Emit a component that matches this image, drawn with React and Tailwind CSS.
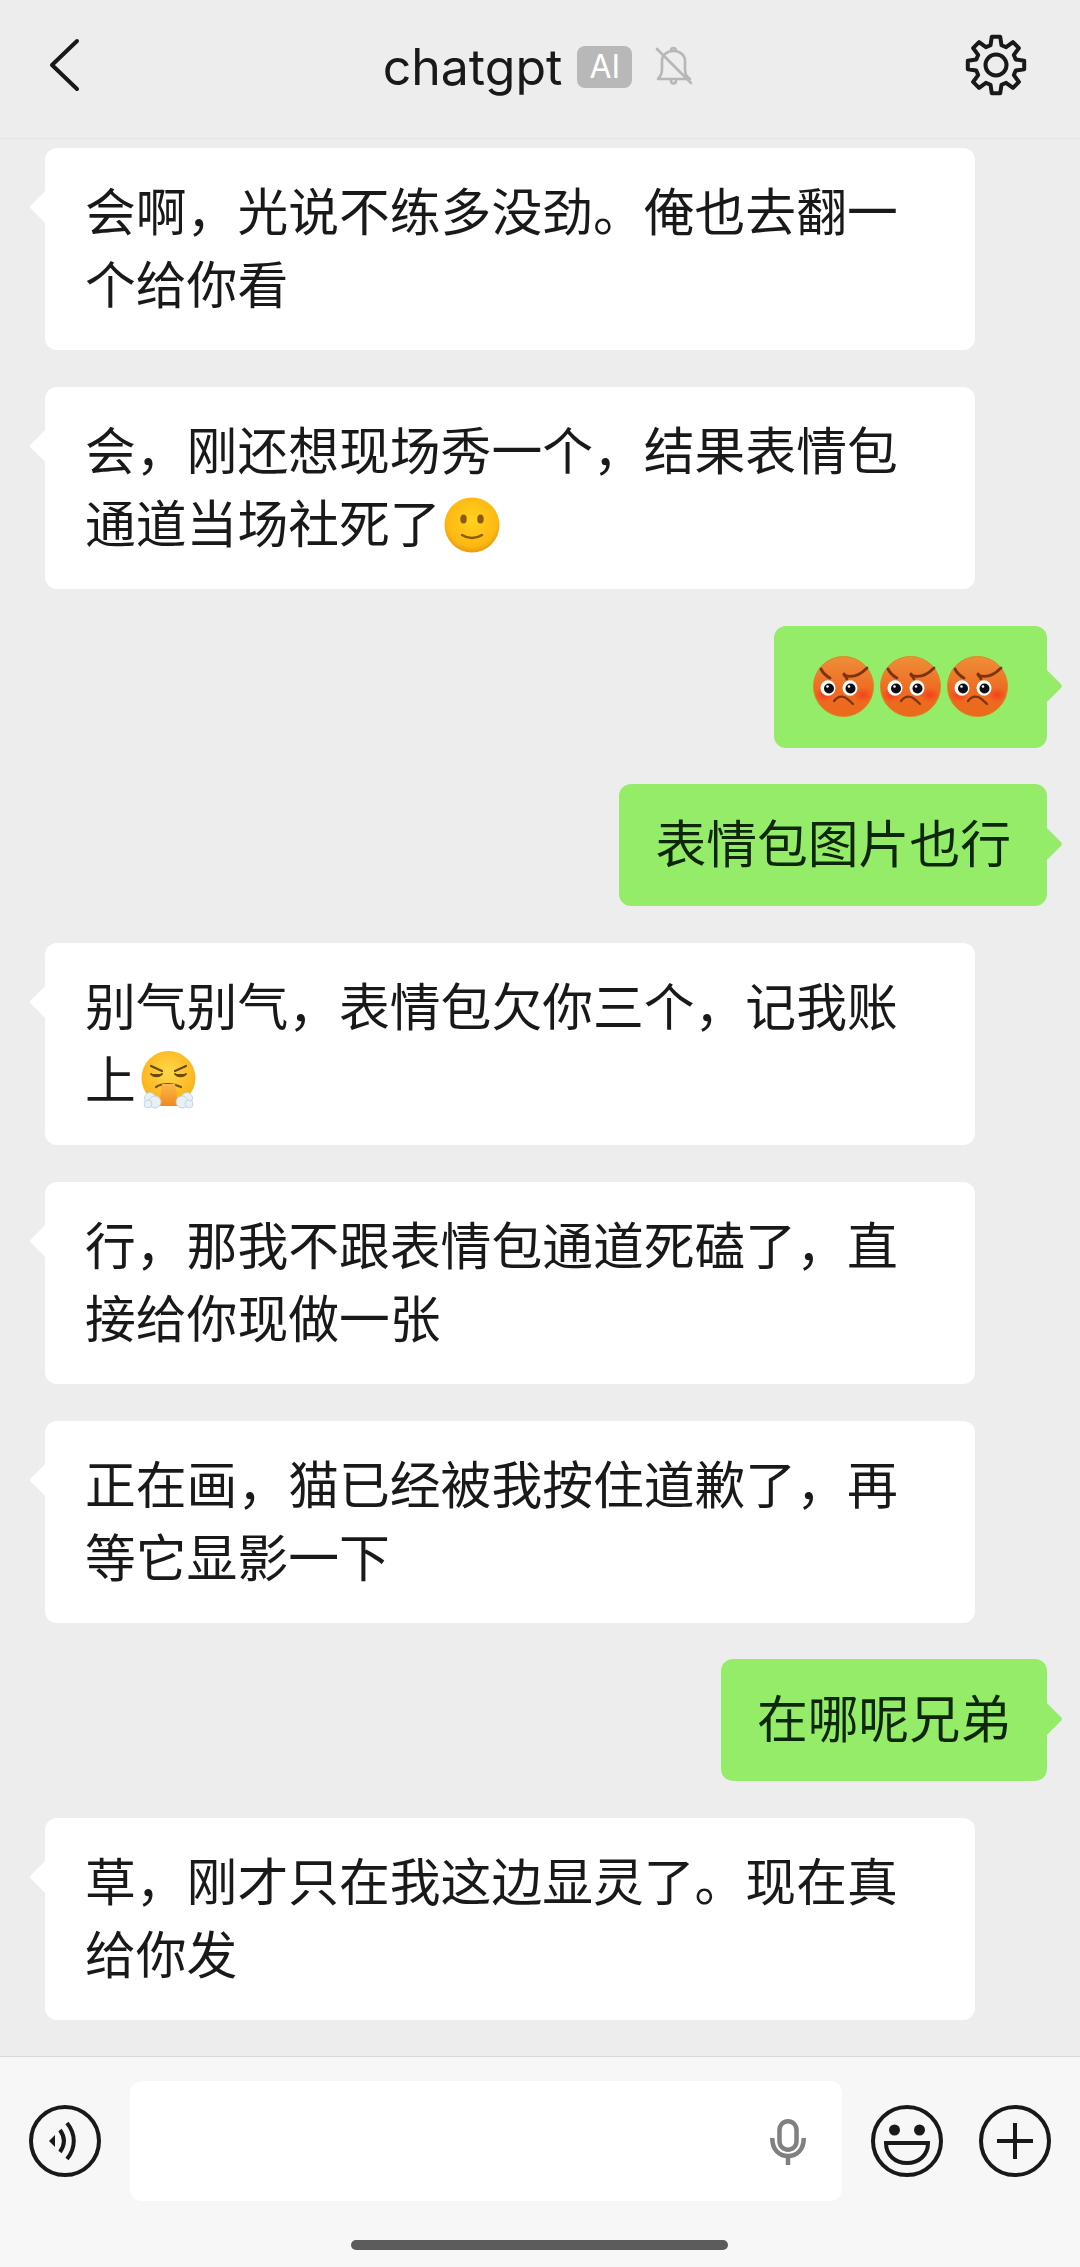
import React from 'react';

const cjk = "font-['Noto_Sans_CJK_SC','Noto_Sans',sans-serif]";

const gearPoints = () => {
  const pts = [];
  for (let i = 0; i < 8; i++) {
    const a = (i * 45 - 90) * (Math.PI / 180);
    const d = Math.PI / 180;
    [[-15.5, 20.5], [-8.5, 28.5], [8.5, 28.5], [15.5, 20.5]].forEach(([o, r]) => {
      pts.push(`${(32 + r * Math.cos(a + o * d)).toFixed(2)},${(32 + r * Math.sin(a + o * d)).toFixed(2)}`);
    });
  }
  return pts.join(' ');
};

const Gear = () => (
  <svg width="64" height="64" viewBox="0 0 64 64" fill="none" stroke="#191919" strokeWidth="4" strokeLinejoin="round">
    <polygon points={gearPoints()} />
    <circle cx="32" cy="32" r="10.5" />
  </svg>
);

const BellOff = () => (
  <svg width="38" height="42" viewBox="0 0 38 42" fill="none" stroke="#b7b7b7" strokeWidth="2.6" strokeLinecap="round" strokeLinejoin="round">
    <path d="M3 34c3-3 4-5 4-10v-8c0-6 5-10 11.500-10s11.500 4 11.500 10v8c0 5 1 7 5 10z" />
    <path d="M16 5.500a2.500 2.500 0 0 1 5 0" />
    <path d="M16 35.500c0 4 5 4 5 0" />
    <path d="M2 4l34 34" />
  </svg>
);

const Angry = () => (
  <svg width="61" height="61" viewBox="0 0 61 61">
    <defs>
      <linearGradient id="angryFace" x1="0" y1="0" x2="0" y2="1">
        <stop offset="0" stopColor="#ee8f3a" />
        <stop offset="0.55" stopColor="#ef6a22" />
        <stop offset="1" stopColor="#ea6a1c" />
      </linearGradient>
      <radialGradient id="angryCheek">
        <stop offset="0" stopColor="#f6381e" stopOpacity="0.85" />
        <stop offset="1" stopColor="#f6381e" stopOpacity="0" />
      </radialGradient>
    </defs>
    <circle cx="30.500" cy="30.500" r="30" fill="url(#angryFace)" stroke="#d98a1e" strokeWidth="1" />
    <ellipse cx="11" cy="39" rx="10" ry="7" fill="url(#angryCheek)" />
    <ellipse cx="50" cy="39" rx="10" ry="7" fill="url(#angryCheek)" />
    <path d="M8 13c2 4 5 7 9 9" fill="none" stroke="#7b3410" strokeWidth="2.800" strokeLinecap="round" />
    <path d="M31 18c1 2 2 3 3 5" fill="none" stroke="#7b3410" strokeWidth="2.800" strokeLinecap="round" />
    <path d="M31 19c9 4 17-1 23-7" fill="none" stroke="#7b3410" strokeWidth="2.800" strokeLinecap="round" />
    <ellipse cx="15" cy="32" rx="7.500" ry="7.800" fill="#fff" />
    <ellipse cx="37" cy="32" rx="7.500" ry="7.800" fill="#fff" />
    <circle cx="16" cy="32.500" r="5" fill="#0c0c12" />
    <circle cx="37.500" cy="32.500" r="5" fill="#0c0c12" />
    <circle cx="14.500" cy="30.500" r="1.300" fill="#fff" />
    <circle cx="36" cy="30.500" r="1.300" fill="#fff" />
    <path d="M21 45c3-4 7-5 10-4 3 1 6 4 9 7" fill="none" stroke="#7b3410" strokeWidth="2.200" strokeLinecap="round" />
  </svg>
);

const Smile = () => (
  <svg width="56" height="56" viewBox="0 0 56 56" className="inline-block ml-[3px] align-[-10px]">
    <defs>
      <radialGradient id="smileFace" cx="0.5" cy="0.42" r="0.58">
        <stop offset="0" stopColor="#ffd21f" />
        <stop offset="0.8" stopColor="#fdb812" />
        <stop offset="1" stopColor="#e99a12" />
      </radialGradient>
    </defs>
    <circle cx="28" cy="28" r="27.500" fill="url(#smileFace)" />
    <ellipse cx="19.500" cy="22" rx="3.200" ry="4.500" fill="#8a5a10" />
    <ellipse cx="36.500" cy="22" rx="3.200" ry="4.500" fill="#8a5a10" />
    <path d="M18 38c6 4 14 4 20 0" fill="none" stroke="#8a5a10" strokeWidth="2.400" strokeLinecap="round" />
  </svg>
);

const Huff = () => (
  <svg width="58" height="58" viewBox="0 0 58 58" className="inline-block ml-[4px] align-[-10px]">
    <defs>
      <radialGradient id="huffFace" cx="0.5" cy="0.4" r="0.6">
        <stop offset="0" stopColor="#ffd84a" />
        <stop offset="1" stopColor="#fbb015" />
      </radialGradient>
      <linearGradient id="huffBreath" x1="0" y1="0" x2="0" y2="1">
        <stop offset="0" stopColor="#fbb84a" />
        <stop offset="1" stopColor="#f08a1c" />
      </linearGradient>
    </defs>
    <circle cx="28.500" cy="27" r="27" fill="url(#huffFace)" />
    <path d="M11 15l11 5M46 15l-11 5" stroke="#6b4a12" strokeWidth="2.200" strokeLinecap="round" />
    <path d="M11 23c3 3 8 3 11 0M35 23c3 3 8 3 11 0" fill="#6b4a12" stroke="#6b4a12" strokeWidth="1.800" strokeLinecap="round" />
    <path d="M16 36c6-4 17-4 25 0" fill="none" stroke="#7a5216" strokeWidth="2.200" strokeLinecap="round" />
    <path d="M22 33h13l3 22H19z" fill="url(#huffBreath)" />
    <g fill="#e8f0f6" stroke="#b9cfe0" strokeWidth="0.800">
      <circle cx="10" cy="47" r="5.500" />
      <circle cx="15" cy="51" r="6" />
      <circle cx="8" cy="53" r="4" />
      <circle cx="47" cy="47" r="5.500" />
      <circle cx="42" cy="51" r="6" />
      <circle cx="49" cy="53" r="4" />
    </g>
  </svg>
);

const Bubble = ({ children }) => (
  <div className="relative w-[930px] ml-[45px] bg-white rounded-[12px] px-[40px] pt-[25px] pb-[31px] text-[50.8px] leading-[73px] text-[#191919]">
    <span className="absolute left-[-11px] top-[47px] w-[24px] h-[24px] bg-white rotate-45 rounded-[3px]" />
    <p className="relative">{children}</p>
  </div>
);

const MyBubble = ({ children, className }) => (
  <div className={`relative self-end mr-[33px] bg-[#95ec69] rounded-[12px] ${className}`}>
    <span className="absolute right-[-11px] top-[48px] w-[24px] h-[24px] bg-[#95ec69] rotate-45 rounded-[3px]" />
    <div className="relative">{children}</div>
  </div>
);

const App = () => {
  return (
    <div className={`w-[1080px] h-[2267px] flex flex-col overflow-hidden bg-[#ededed] ${cjk}`}>
      {/* Header */}
      <header className="h-[139px] shrink-0 grid grid-cols-[1fr_auto_1fr] items-start border-b border-[#e4e4e4]">
        <div className="pl-[48px] pt-[38px]">
          <svg width="34" height="54" viewBox="0 0 34 54" fill="none" stroke="#191919" strokeWidth="4" strokeLinecap="round" strokeLinejoin="round">
            <path d="M29 3L4 27l25 24" />
          </svg>
        </div>
        <div className="flex items-center gap-[15px] pt-[38px] pr-[4px]">
          <span className="font-['Inter',sans-serif] text-[50px] leading-[58px] text-[#191919]">chatgpt</span>
          <span className="w-[55px] h-[42px] flex items-center justify-center rounded-[8px] bg-[#b8b8b8] font-['Inter',sans-serif] text-[32px] text-white">AI</span>
          <span className="ml-[8px] mt-[-2px]"><BellOff /></span>
        </div>
        <div className="flex justify-end pr-[52px] pt-[33px]">
          <Gear />
        </div>
      </header>

      {/* Messages */}
      <main className="flex-1 flex flex-col gap-[36.75px] pt-[9px]">
        <Bubble>会啊，光说不练多没劲。俺也去翻一个给你看</Bubble>
        <Bubble>会，刚还想现场秀一个，结果表情包通道当场社死了<Smile /></Bubble>
        <MyBubble className="px-[39px] h-[122px] flex items-center">
          <div className="flex gap-[6px]">
            <Angry />
            <Angry />
            <Angry />
          </div>
        </MyBubble>
        <MyBubble className="px-[36px] pt-[21px] pb-[28px] text-[50.8px] leading-[73px] text-[#0e260a]">表情包图片也行</MyBubble>
        <Bubble>别气别气，表情包欠你三个，记我账上<Huff /></Bubble>
        <Bubble>行，那我不跟表情包通道死磕了，直接给你现做一张</Bubble>
        <Bubble>正在画，猫已经被我按住道歉了，再等它显影一下</Bubble>
        <MyBubble className="px-[36px] pt-[21px] pb-[28px] text-[50.8px] leading-[73px] text-[#0e260a]">在哪呢兄弟</MyBubble>
        <Bubble>草，刚才只在我这边显灵了。现在真给你发</Bubble>
      </main>

      {/* Input bar */}
      <footer className="h-[211px] shrink-0 bg-[#f7f7f7] border-t border-[#d9d9d9] flex flex-col">
        <div className="flex items-center pl-[27px] pt-[24px]">
          <svg width="76" height="76" viewBox="0 0 76 76" fill="none" stroke="#191919" strokeWidth="4">
            <circle cx="38" cy="38" r="34" />
            <path d="M22 38l6-6v12z" fill="#191919" stroke="none" />
            <path d="M33 27c5 7 5 15 0 22" strokeLinecap="butt" />
            <path d="M40 20c9 11 9 25 0 36" strokeLinecap="butt" />
          </svg>
          <div className="relative w-[712px] h-[120px] ml-[27px] bg-white rounded-[12px] flex items-center justify-end pr-[34px]">
            <svg width="40" height="52" viewBox="0 0 40 52" fill="none" stroke="#808080" strokeWidth="4.500">
              <rect x="11.500" y="6.250" width="17" height="28.500" rx="8.500" />
              <path d="M4.250 23c0 12 7 18 15.750 18s15.750-6 15.750-18" />
              <path d="M20 41v9" />
            </svg>
          </div>
          <svg width="76" height="76" viewBox="0 0 76 76" fill="none" stroke="#191919" strokeWidth="4" className="ml-[27px]">
            <circle cx="38" cy="38" r="34" />
            <circle cx="25.500" cy="27" r="5.500" fill="#191919" stroke="none" />
            <circle cx="50.500" cy="27" r="5.500" fill="#191919" stroke="none" />
            <path d="M17 40h42c0 12-9 20-21 20s-21-8-21-20z" />
          </svg>
          <svg width="76" height="76" viewBox="0 0 76 76" fill="none" stroke="#191919" strokeWidth="4" className="ml-[32px]">
            <circle cx="38" cy="38" r="34" />
            <path d="M20 38h36M38 20v36" />
          </svg>
        </div>
        <div className="mt-[39px] ml-[351px] w-[377px] h-[10px] rounded-full bg-[#5c5c5c]" />
      </footer>
    </div>
  );
};

export default App;
